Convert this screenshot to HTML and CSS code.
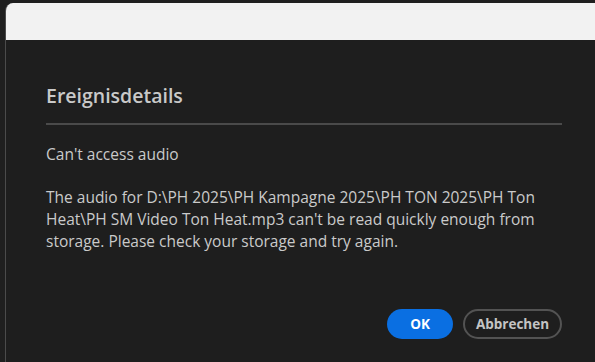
FILE: index.html
```html
<!DOCTYPE html>
<html lang="de">
<head>
  <meta charset="UTF-8" />
  <meta name="viewport" content="width=device-width, initial-scale=1.0" />
  <title>Ereignisdetails</title>
  <link rel="stylesheet" href="styles.css">
</head>
<body>
  <div class="window">
    <div class="titlebar"></div>
    <div class="dialog">
      <h1 class="dialog-title">Ereignisdetails</h1>
      <div class="dialog-body">
        <p>Can't access audio</p>
        <p>The audio for D:\PH 2025\PH Kampagne 2025\PH TON 2025\PH Ton Heat\PH SM Video Ton Heat.mp3 can't be read quickly enough from storage. Please check your storage and try again.</p>
      </div>
      <div class="dialog-actions">
        <button class="btn btn-primary">OK</button>
        <button class="btn btn-secondary">Abbrechen</button>
      </div>
    </div>
  </div>
</body>
</html>
```

FILE: styles.css
```css
body {
  margin: 0;
  height: 362px;
  overflow: hidden;
  background: #1f1f1f;
  font-family: "Open Sans", Lato, sans-serif;
}
.window {
  margin: 3px 0 0 5px;
  height: 359px;
  border-left: 1px solid #4b4b4b;
  border-top-left-radius: 8px;
  background: #1e1e1e;
  overflow: hidden;
  display: flex;
  flex-direction: column;
}
.titlebar {
  height: 37px;
  background: #f2f2f2;
}
.dialog {
  flex: 1;
  padding: 44px 33px 0 40px;
  display: flex;
  flex-direction: column;
}
.dialog-title {
  margin: 0;
  font-size: 19.5px;
  line-height: 24px;
  font-weight: 600;
  color: #c9c9c9;
  padding-bottom: 15px;
  border-bottom: 2px solid #4a4a4a;
}
.dialog-body {
  color: #cacaca;
  font-size: 15.5px;
  line-height: 22px;
  padding-top: 18px;
}
.dialog-body p {
  margin: 0 0 21px;
}
.dialog-body p:last-child {
  margin-bottom: 0;
}
.dialog-actions {
  display: flex;
  justify-content: flex-end;
  gap: 10px;
  margin-top: 57px;
}
.btn {
  height: 30px;
  border-radius: 15px;
  font-family: inherit;
  font-size: 13.5px;
  font-weight: bold;
  cursor: pointer;
}
.btn-primary {
  width: 66px;
  background: #0a6fe2;
  color: #ffffff;
  border: none;
}
.btn-secondary {
  width: 99px;
  background: transparent;
  color: #c4c4c4;
  border: 2px solid #535353;
}
```
